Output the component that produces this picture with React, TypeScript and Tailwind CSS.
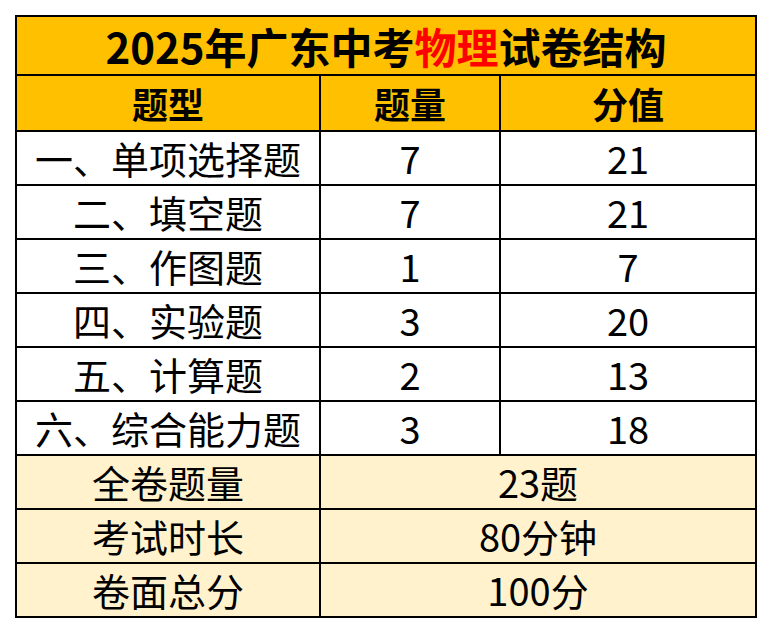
import React from 'react';

const rows = [
  { name: '一、单项选择题', count: '7', score: '21' },
  { name: '二、填空题', count: '7', score: '21' },
  { name: '三、作图题', count: '1', score: '7' },
  { name: '四、实验题', count: '3', score: '20' },
  { name: '五、计算题', count: '2', score: '13' },
  { name: '六、综合能力题', count: '3', score: '18' },
];

const summary = [
  { label: '全卷题量', value: '23题' },
  { label: '考试时长', value: '80分钟' },
  { label: '卷面总分', value: '100分' },
];

const cell = 'flex items-center justify-center leading-none';

export default function App() {
  return (
    <div className="w-[774px] h-[634px] bg-white pt-[15px] pl-[15px]" style={{ fontFamily: '"Noto Sans CJK SC", "Noto Sans", sans-serif' }}>
      <div className="w-[742px] grid grid-cols-[302px_178px_254px] grid-rows-[57px_54px_repeat(9,52px)] gap-[2px] p-[2px] bg-black text-black">
        {/* Title */}
        <div className={`${cell} col-span-3 bg-[#ffc000] text-[42px] font-bold`}>
          2025年广东中考<span className="text-[#ff0000]">物理</span>试卷结构
        </div>

        {/* Header */}
        <div className={`${cell} bg-[#ffc000] text-[36px] font-bold`}>题型</div>
        <div className={`${cell} bg-[#ffc000] text-[36px] font-bold`}>题量</div>
        <div className={`${cell} bg-[#ffc000] text-[36px] font-bold`}>分值</div>

        {rows.map((r) => (
          <React.Fragment key={r.name}>
            <div className={`${cell} bg-white text-[38px]`}>{r.name}</div>
            <div className={`${cell} bg-white text-[38px]`}>{r.count}</div>
            <div className={`${cell} bg-white text-[38px]`}>{r.score}</div>
          </React.Fragment>
        ))}

        {summary.map((s) => (
          <React.Fragment key={s.label}>
            <div className={`${cell} bg-[#fff2cc] text-[38px]`}>{s.label}</div>
            <div className={`${cell} col-span-2 bg-[#fff2cc] text-[38px]`}>{s.value}</div>
          </React.Fragment>
        ))}
      </div>
    </div>
  );
}
